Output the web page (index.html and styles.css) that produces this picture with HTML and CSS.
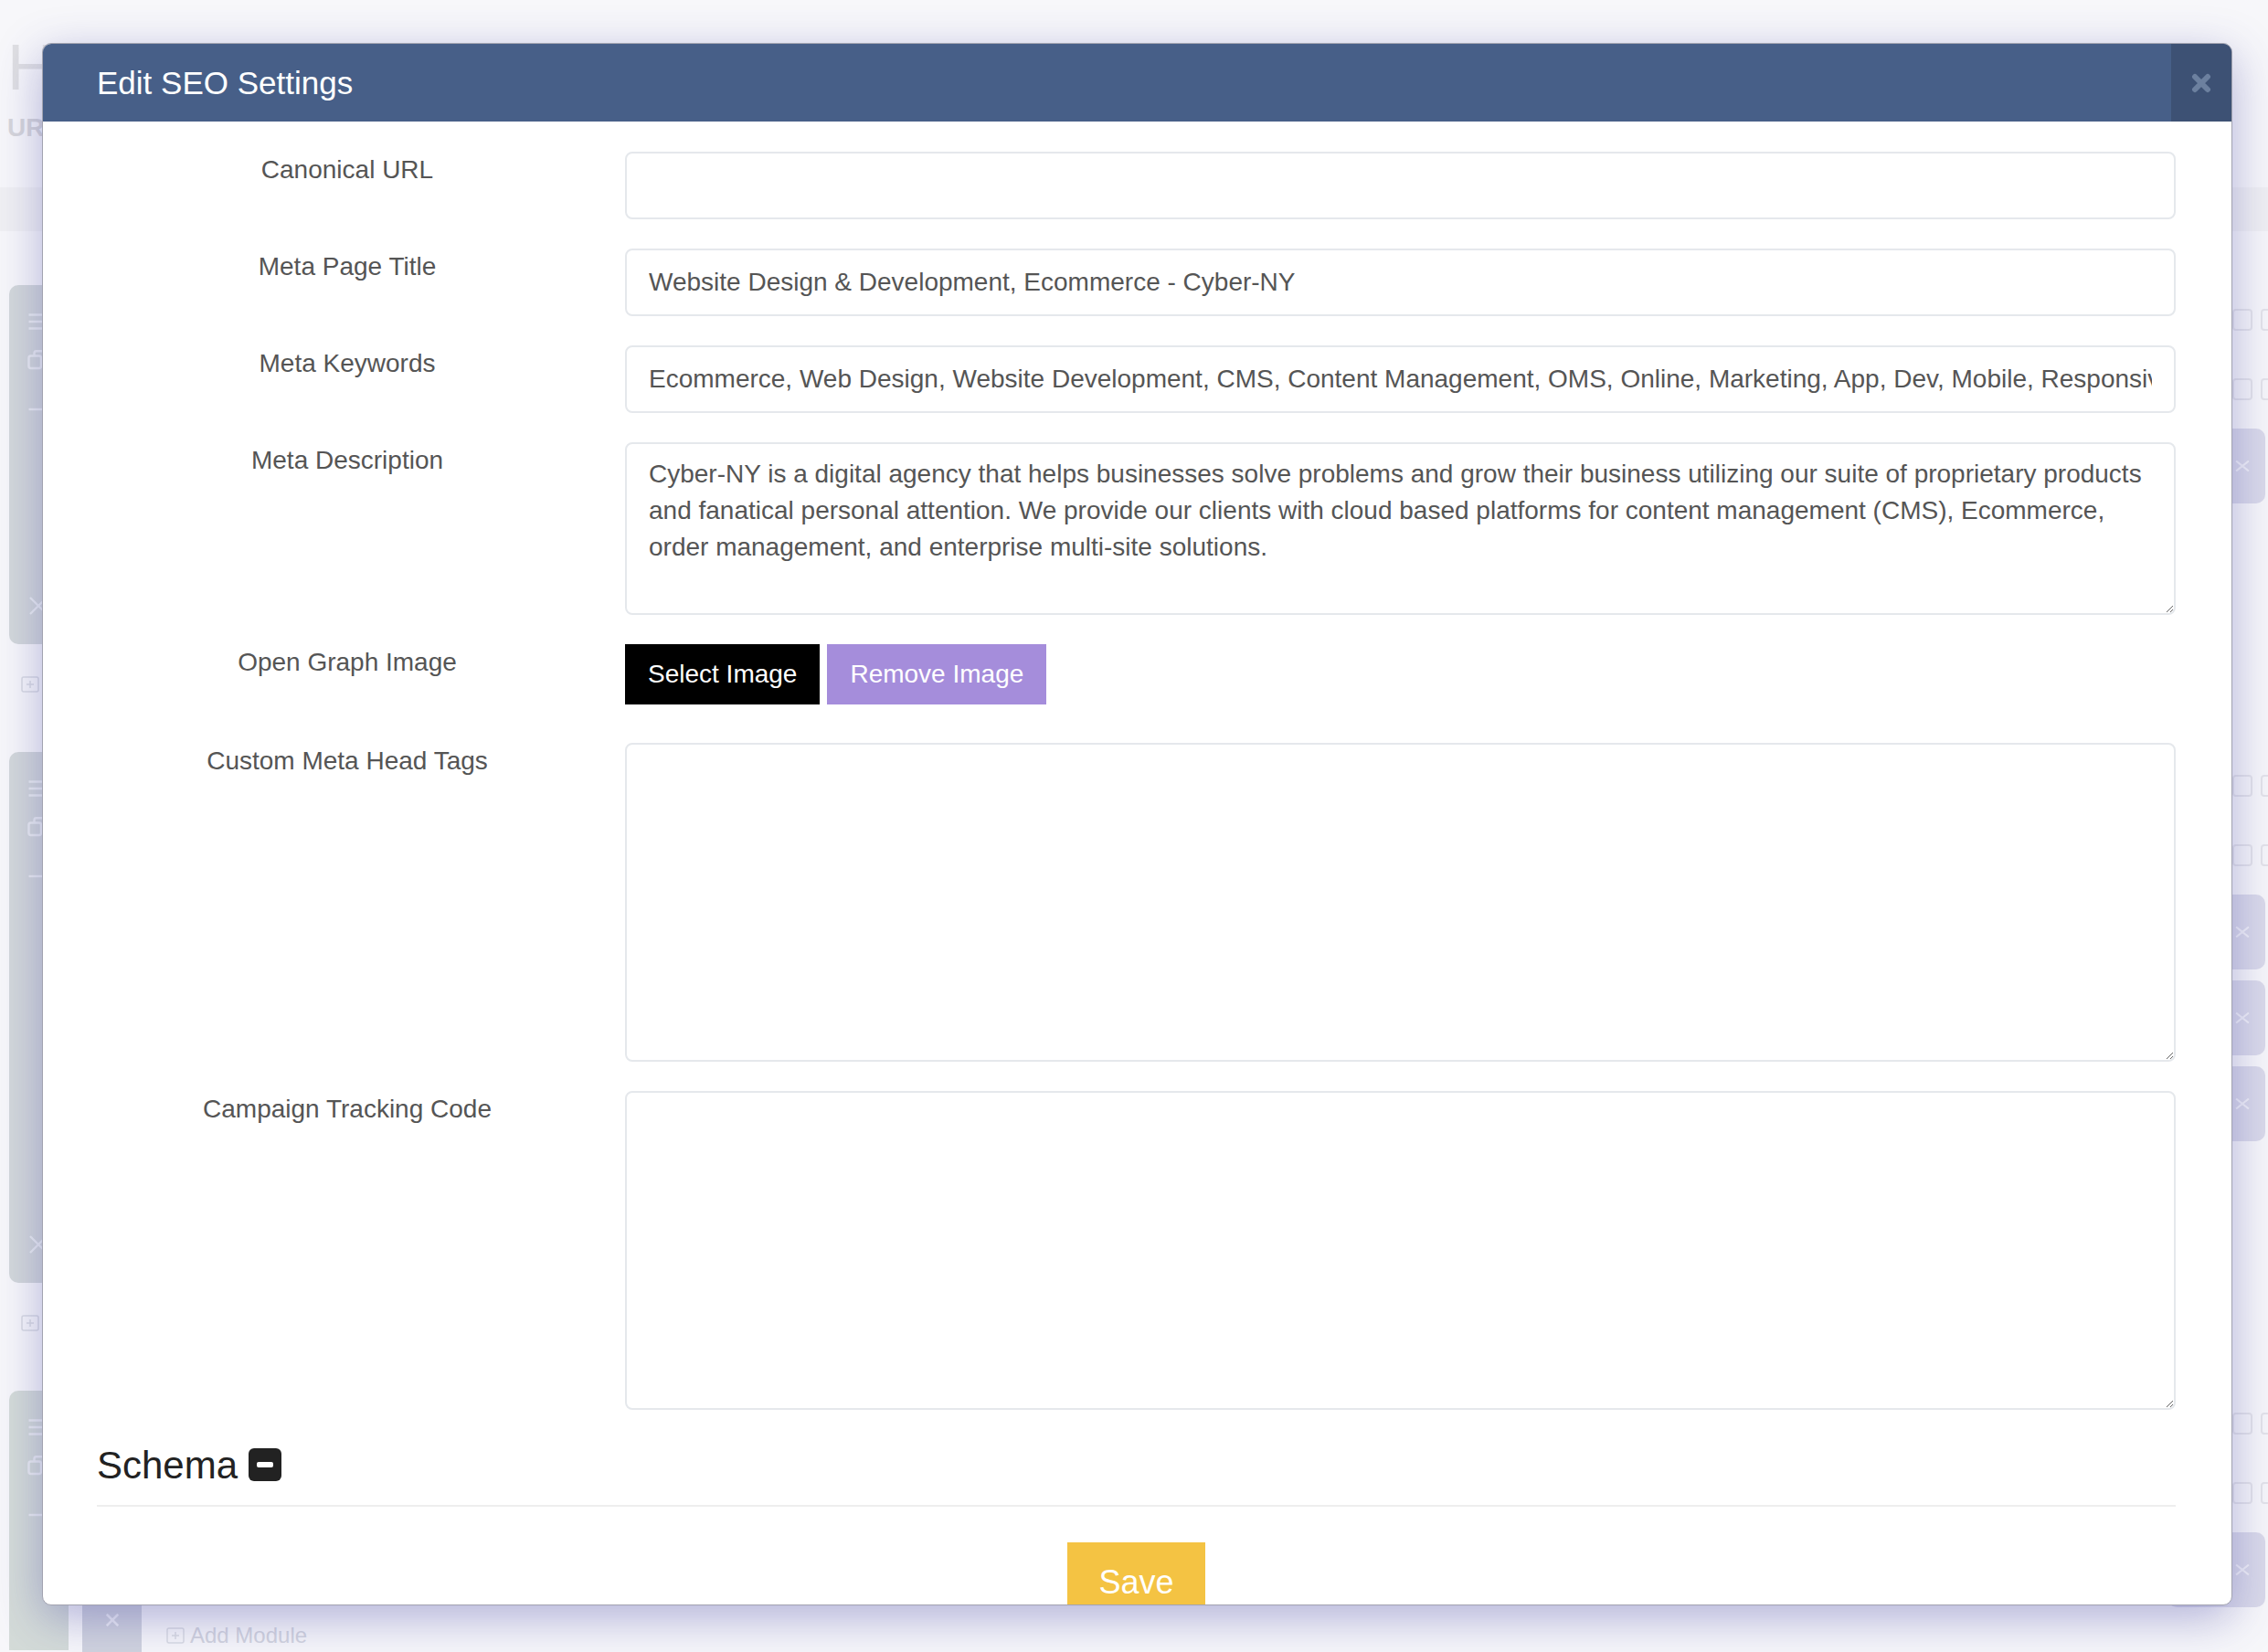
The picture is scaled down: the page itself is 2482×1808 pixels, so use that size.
FILE: index.html
```html
<!DOCTYPE html>
<html>
<head>
    <title>Edit SEO Settings</title>
    <link rel="stylesheet" href="styles.css">
</head>
<body>
    <!-- page builder behind the dialog -->
    <div class="page">
        <header class="page-head">
            <h1 class="page-title">H</h1>
            <div class="page-url">UR</div>
        </header>
        <div class="page-band"></div>
        <div class="builder">
            <div class="rail">
                <div class="rail-panel panel-one">
                    <svg class="rail-icon" viewBox="0 0 16 16"><path d="M1 3h14M1 8h14M1 13h14"/></svg>
                    <svg class="rail-icon" viewBox="0 0 16 16"><rect x="1" y="5" width="9" height="9" rx="1.5"/><path d="M5 5V3a1.5 1.5 0 0 1 1.5-1.5h6A1.5 1.5 0 0 1 14 3v6a1.5 1.5 0 0 1-1.5 1.5H10"/></svg>
                    <svg class="rail-icon dash" viewBox="0 0 16 16"><path d="M1 8h14"/></svg>
                    <svg class="rail-icon close" viewBox="0 0 16 16"><path d="M2 2l12 12M14 2L2 14"/></svg>
                </div>
                <svg class="plus-box" viewBox="0 0 20 18"><rect x="1" y="1" width="18" height="16" rx="2"/><path d="M10 5v8M6 9h8"/></svg>
                <div class="rail-panel panel-two">
                    <svg class="rail-icon" viewBox="0 0 16 16"><path d="M1 3h14M1 8h14M1 13h14"/></svg>
                    <svg class="rail-icon" viewBox="0 0 16 16"><rect x="1" y="5" width="9" height="9" rx="1.5"/><path d="M5 5V3a1.5 1.5 0 0 1 1.5-1.5h6A1.5 1.5 0 0 1 14 3v6a1.5 1.5 0 0 1-1.5 1.5H10"/></svg>
                    <svg class="rail-icon dash" viewBox="0 0 16 16"><path d="M1 8h14"/></svg>
                    <svg class="rail-icon close" viewBox="0 0 16 16"><path d="M2 2l12 12M14 2L2 14"/></svg>
                </div>
                <svg class="plus-box" viewBox="0 0 20 18"><rect x="1" y="1" width="18" height="16" rx="2"/><path d="M10 5v8M6 9h8"/></svg>
                <div class="rail-panel panel-three">
                    <svg class="rail-icon" viewBox="0 0 16 16"><path d="M1 3h14M1 8h14M1 13h14"/></svg>
                    <svg class="rail-icon" viewBox="0 0 16 16"><rect x="1" y="5" width="9" height="9" rx="1.5"/><path d="M5 5V3a1.5 1.5 0 0 1 1.5-1.5h6A1.5 1.5 0 0 1 14 3v6a1.5 1.5 0 0 1-1.5 1.5H10"/></svg>
                    <svg class="rail-icon dash" viewBox="0 0 16 16"><path d="M1 8h14"/></svg>
                </div>
            </div>
            <div class="canvas">
                <div class="module-foot">
                    <div class="module-remove">
                        <svg viewBox="0 0 16 16"><path d="M3 3l10 10M13 3L3 13"/></svg>
                    </div>
                    <div class="add-module">
                        <svg class="plus-box" viewBox="0 0 20 18"><rect x="1" y="1" width="18" height="16" rx="2"/><path d="M10 5v8M6 9h8"/></svg>
                        Add Module
                    </div>
                </div>
            </div>
            <div class="rail-right">
                <div class="mini-row first"><span class="mini"></span><span class="mini"></span></div>
                <div class="mini-row"><span class="mini"></span><span class="mini"></span></div>
                <div class="side-card"><svg viewBox="0 0 16 16"><path d="M3 4l10 8M13 4L3 12"/></svg></div>
                <div class="mini-row gap-big"><span class="mini"></span><span class="mini"></span></div>
                <div class="mini-row"><span class="mini"></span><span class="mini"></span></div>
                <div class="side-card"><svg viewBox="0 0 16 16"><path d="M3 4l10 8M13 4L3 12"/></svg></div>
                <div class="side-card tight"><svg viewBox="0 0 16 16"><path d="M3 4l10 8M13 4L3 12"/></svg></div>
                <div class="side-card tight"><svg viewBox="0 0 16 16"><path d="M3 4l10 8M13 4L3 12"/></svg></div>
                <div class="mini-row gap-big"><span class="mini"></span><span class="mini"></span></div>
                <div class="mini-row"><span class="mini"></span><span class="mini"></span></div>
                <div class="side-card"><svg viewBox="0 0 16 16"><path d="M3 4l10 8M13 4L3 12"/></svg></div>
            </div>
        </div>
    </div>

    <!-- SEO dialog -->
    <div class="modal">
        <div class="modal-header">
            <h4 class="modal-title">Edit SEO Settings</h4>
            <button class="modal-close" type="button">
                <svg viewBox="0 0 22 22" width="22" height="22"><path d="M4 4l14 14M18 4L4 18"/></svg>
            </button>
        </div>
        <div class="modal-body">
            <form class="seo-form">
                <div class="field">
                    <label class="field-label" for="canonicalUrl">Canonical URL</label>
                    <input class="form-input" type="text" id="canonicalUrl">
                </div>
                <div class="field">
                    <label class="field-label" for="metaTitle">Meta Page Title</label>
                    <input class="form-input" type="text" id="metaTitle" value="Website Design &amp; Development, Ecommerce - Cyber-NY">
                </div>
                <div class="field">
                    <label class="field-label" for="metaKeywords">Meta Keywords</label>
                    <input class="form-input" type="text" id="metaKeywords" value="Ecommerce, Web Design, Website Development, CMS, Content Management, OMS, Online, Marketing, App, Dev, Mobile, Responsive, Web Development">
                </div>
                <div class="field">
                    <label class="field-label" for="metaDescription">Meta Description</label>
                    <textarea class="form-input desc" id="metaDescription">Cyber-NY is a digital agency that helps businesses solve problems and grow their business utilizing our suite of proprietary products and fanatical personal attention. We provide our clients with cloud based platforms for content management (CMS), Ecommerce, order management, and enterprise multi-site solutions.</textarea>
                </div>
                <div class="field field-buttons">
                    <label class="field-label">Open Graph Image</label>
                    <div class="image-actions">
                        <button class="btn btn-select" type="button">Select Image</button>
                        <button class="btn btn-remove" type="button">Remove Image</button>
                    </div>
                </div>
                <div class="field">
                    <label class="field-label" for="headTags">Custom Meta Head Tags</label>
                    <textarea class="form-input tall" id="headTags"></textarea>
                </div>
                <div class="field">
                    <label class="field-label" for="trackingCode">Campaign Tracking Code</label>
                    <textarea class="form-input tall" id="trackingCode"></textarea>
                </div>
            </form>
            <h3 class="section-title">Schema <svg class="icon-minus" viewBox="0 0 36 36" width="36" height="36"><rect width="36" height="36" rx="6"/><rect class="bar" x="9" y="15" width="18" height="6" rx="2"/></svg></h3>
            <hr class="divider">
            <div class="save-row">
                <button class="btn btn-save" type="button">Save</button>
            </div>
        </div>
    </div>
</body>
</html>
```

FILE: styles.css
```css
body {
    margin: 0;
    width: 2482px;
    height: 1808px;
    overflow: hidden;
    position: relative;
    background-color: #f7f7fa;
    font-family: "Liberation Sans", Arial, sans-serif;
}

/* ---- builder page in the background ---- */
.page {
    height: 100%;
    display: flex;
    flex-direction: column;
    overflow: hidden;
}
.page-head {
    padding: 38px 8px 0;
}
.page-title {
    margin: 0;
    font-size: 71px;
    line-height: 71px;
    font-weight: 400;
    color: #dfdfe2;
}
.page-url {
    margin-top: 17px;
    font-size: 28px;
    line-height: 28px;
    font-weight: bold;
    color: #d6d6da;
}
.page-band {
    height: 48px;
    margin-top: 51px;
    background-color: #f0f0f3;
}
.builder {
    flex: 1;
    display: flex;
    min-height: 0;
    padding-top: 17px;
}
.rail {
    width: 80px;
    padding-left: 10px;
    display: flex;
    flex-direction: column;
}
.rail > * {
    flex-shrink: 0;
}
.rail-panel {
    width: 65px;
    box-sizing: border-box;
    display: flex;
    flex-direction: column;
    align-items: flex-start;
    padding: 28px 0 30px 20px;
    background-color: #d3d8da;
    border-radius: 10px;
}
.panel-one {
    margin-top: 42px;
    height: 393px;
}
.panel-two {
    margin-top: 65px;
    height: 581px;
}
.panel-three {
    margin-top: 65px;
    height: 284px;
    border-radius: 10px 10px 0 0;
    background-color: #d4dbd8;
}
.rail-icon {
    width: 24px;
    height: 24px;
    margin-bottom: 18px;
    fill: none;
    stroke: #eceef1;
    stroke-width: 1.6;
}
.rail-icon.dash {
    margin-top: 12px;
}
.rail-icon.close {
    margin-top: auto;
    margin-bottom: 0;
}
.plus-box {
    width: 20px;
    height: 18px;
    flex-shrink: 0;
    fill: none;
    stroke: #d9dbe2;
    stroke-width: 1.5;
}
.rail > .plus-box {
    margin: 35px 0 0 13px;
}
.canvas {
    flex: 1;
    display: flex;
    flex-direction: column;
}
.module-foot {
    margin-top: auto;
    display: flex;
    align-items: flex-end;
}
.module-remove {
    width: 65px;
    height: 80px;
    background-color: #d0d3de;
    display: flex;
    align-items: flex-start;
    justify-content: center;
    padding-top: 35px;
    box-sizing: border-box;
}
.module-remove svg {
    width: 20px;
    height: 20px;
    fill: none;
    stroke: #eeeff5;
    stroke-width: 2;
}
.add-module {
    display: flex;
    align-items: center;
    gap: 6px;
    margin: 0 0 4px 27px;
    font-size: 24px;
    line-height: 28px;
    color: #d2d4de;
}
.rail-right {
    width: 110px;
    display: flex;
    flex-direction: column;
}
.rail-right > * {
    flex-shrink: 0;
}
.mini-row {
    display: flex;
    gap: 9px;
    padding-left: 71px;
    margin-top: 52px;
}
.mini-row.first {
    margin-top: 68px;
}
.mini-row.gap-big {
    margin-top: 297px;
}
.mini {
    width: 22px;
    height: 24px;
    box-sizing: border-box;
    border: 2px solid #e4e4ea;
    border-radius: 4px;
    flex-shrink: 0;
}
.side-card {
    height: 82px;
    margin-top: 31px;
    margin-right: 3px;
    background-color: #dadaea;
    border-radius: 10px;
    display: flex;
    align-items: center;
    justify-content: flex-end;
    padding-right: 14px;
}
.side-card.tight {
    margin-top: 12px;
}
.side-card svg {
    width: 22px;
    height: 22px;
    fill: none;
    stroke: #f2f2f8;
    stroke-width: 1.6;
}

/* ---- dialog ---- */
.modal {
    position: absolute;
    left: 46px;
    top: 47px;
    width: 2397px;
    height: 1710px;
    box-sizing: border-box;
    display: flex;
    flex-direction: column;
    background-color: #fff;
    border: 1px solid #a2a3b0;
    border-radius: 10px;
    overflow: hidden;
    box-shadow: 0 14px 50px rgba(64, 64, 160, 0.38);
}
.modal-header {
    height: 85px;
    flex-shrink: 0;
    display: flex;
    align-items: center;
    background-color: #475f88;
}
.modal-title {
    margin: 0;
    padding-left: 59px;
    font-size: 35px;
    font-weight: 400;
    color: #fff;
}
.modal-close {
    margin-left: auto;
    width: 66px;
    height: 100%;
    padding: 0;
    border: none;
    background-color: #3d5174;
    display: flex;
    align-items: center;
    justify-content: center;
    cursor: pointer;
}
.modal-close svg {
    fill: none;
    stroke: #6c809f;
    stroke-width: 6;
    stroke-linecap: round;
}
.modal-body {
    flex: 1;
    overflow: hidden;
    padding: 33px 61px 0 59px;
}

.seo-form {
    margin: 0;
}
.field {
    display: grid;
    grid-template-columns: 608px 1fr;
    margin: 0 0 32px -30px;
}
.field-label {
    text-align: center;
    font-size: 28px;
    line-height: 40px;
    color: #555;
}
.form-input {
    box-sizing: border-box;
    width: 100%;
    height: 74px;
    margin: 0;
    padding: 0 24px;
    border: 2px solid #e5e8ec;
    border-radius: 8px;
    font-family: "Liberation Sans", Arial, sans-serif;
    font-size: 28px;
    color: #555;
    background-color: #fff;
    outline: none;
}
textarea.form-input {
    display: block;
    padding: 13px 24px;
    line-height: 40px;
}
.form-input.desc {
    height: 189px;
}
.form-input.tall {
    height: 349px;
}
.field-buttons {
    margin-bottom: 42px;
}
.image-actions {
    display: flex;
    gap: 8px;
}
.btn {
    border: none;
    border-radius: 0;
    padding: 13px 25px;
    font-family: "Liberation Sans", Arial, sans-serif;
    font-size: 28px;
    line-height: 40px;
    color: #fff;
    cursor: pointer;
}
.btn-select {
    background-color: #000;
}
.btn-remove {
    background-color: #a58ddb;
}

.section-title {
    margin: 38px 0 20px;
    font-size: 42px;
    line-height: 46px;
    font-weight: 400;
    color: #222;
}
.icon-minus {
    vertical-align: -3px;
    fill: #222;
}
.icon-minus .bar {
    fill: #fff;
}
.divider {
    margin: 0 0 39px;
    border: none;
    border-top: 2px solid #eee;
}
.save-row {
    text-align: center;
}
.btn-save {
    padding: 20px 34px;
    font-size: 36px;
    line-height: 48px;
    background-color: #f4c343;
}
```
